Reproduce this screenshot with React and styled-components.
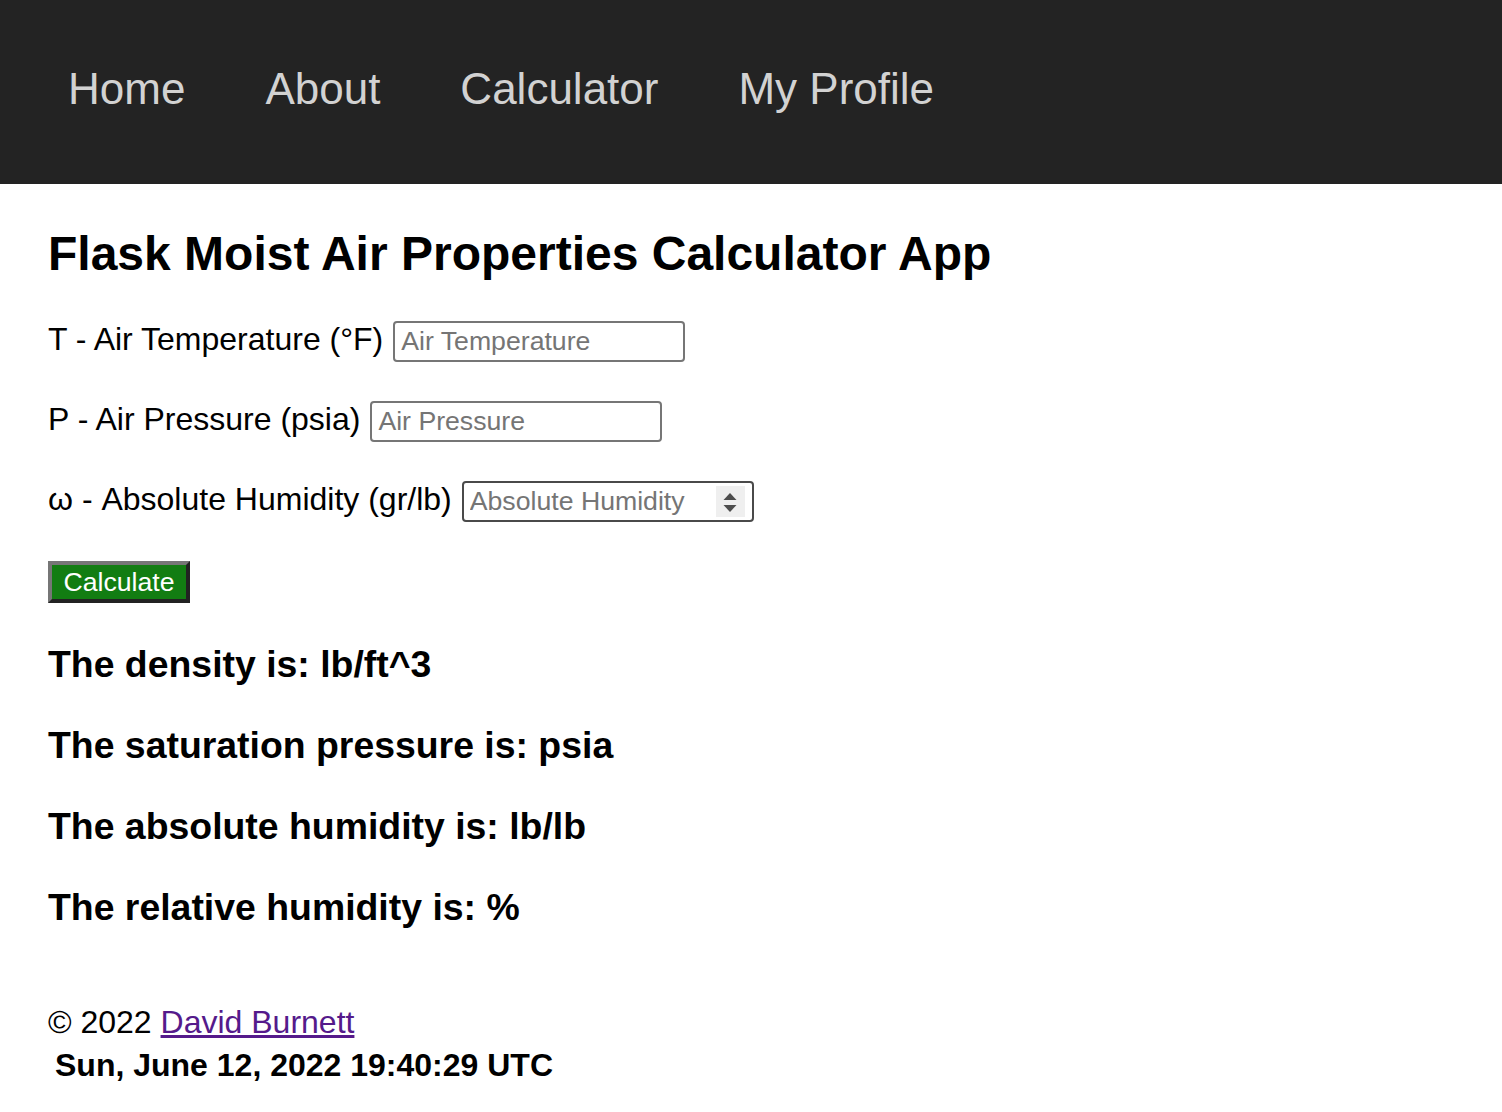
import styled, { createGlobalStyle } from "styled-components";

const GlobalStyle = createGlobalStyle`
  html, body {
    margin: 0;
    padding: 0;
    background: #fff;
    font-family: "Liberation Sans", Arial, Helvetica, sans-serif;
    color: #000;
  }
`;

const links = ["Home", "About", "Calculator", "My Profile"];

const results = [
  "The density is: lb/ft^3",
  "The saturation pressure is: psia",
  "The absolute humidity is: lb/lb",
  "The relative humidity is: %",
];

const App = () => {
  return (
    <>
      <GlobalStyle />
      <NavBar>
        {links.map((link) => (
          <NavLink key={link} href="#">
            {link}
          </NavLink>
        ))}
      </NavBar>

      <Main>
        <Title>Flask Moist Air Properties Calculator App</Title>

        <form onSubmit={(e) => e.preventDefault()}>
          <Field>
            <Label htmlFor="temp">T - Air Temperature (°F)</Label>
            <TextInput id="temp" type="text" placeholder="Air Temperature" />
          </Field>

          <Field>
            <Label htmlFor="pressure">P - Air Pressure (psia)</Label>
            <TextInput id="pressure" type="text" placeholder="Air Pressure" />
          </Field>

          <Field>
            <Label htmlFor="humidity">ω - Absolute Humidity (gr/lb)</Label>
            <NumberBox>
              <NumberInput
                id="humidity"
                type="number"
                placeholder="Absolute Humidity"
              />
              <Spinner>
                <svg width="14" height="24" viewBox="0 0 14 24">
                  <path d="M7 3 L13.5 10 L0.5 10 Z" fill="#4d4d4d" />
                  <path d="M0.5 15 L13.5 15 L7 22 Z" fill="#4d4d4d" />
                </svg>
              </Spinner>
            </NumberBox>
          </Field>

          <Button type="submit">Calculate</Button>
        </form>

        {results.map((r) => (
          <Result key={r}>{r}</Result>
        ))}

        <Footer>
          <div>
            © 2022 <FooterLink href="#">David Burnett</FooterLink>
          </div>
          <Stamp>Sun, June 12, 2022 19:40:29 UTC</Stamp>
        </Footer>
      </Main>
    </>
  );
};

// Styled components
const NavBar = styled.nav`
  display: flex;
  align-items: flex-start;
  box-sizing: border-box;
  height: 184px;
  padding: 64px 0 0 28px;
  background: #232323;
`;

const NavLink = styled.a`
  padding: 0 40px;
  font-size: 44px;
  color: #d2d2d2;
  text-decoration: none;
`;

const Main = styled.main`
  padding: 0 48px 40px;
`;

const Title = styled.h2`
  margin: 42px 0 40px;
  font-size: 48px;
  font-weight: bold;
`;

const Field = styled.div`
  display: flex;
  align-items: center;
  gap: 10px;
  height: 41px;
  margin-bottom: 39px;
`;

const Label = styled.label`
  font-size: 32px;
  position: relative;
  top: -2px;
`;

const TextInput = styled.input`
  box-sizing: border-box;
  width: 292px;
  height: 41px;
  padding: 0 6px;
  border: 2px solid #767676;
  border-radius: 4px;
  font-family: inherit;
  font-size: 26.67px;
  color: #000;

  &::placeholder {
    color: #757575;
  }
`;

const NumberBox = styled.div`
  display: flex;
  align-items: center;
  box-sizing: border-box;
  width: 292px;
  height: 41px;
  padding: 0 7px 0 6px;
  border: 2px solid #4a4a4a;
  border-radius: 4px;
`;

const NumberInput = styled.input`
  flex: 1;
  min-width: 0;
  padding: 0;
  border: none;
  outline: none;
  font-family: inherit;
  font-size: 26.67px;
  -moz-appearance: textfield;

  &::placeholder {
    color: #757575;
  }

  &::-webkit-inner-spin-button,
  &::-webkit-outer-spin-button {
    -webkit-appearance: none;
    margin: 0;
  }
`;

const Spinner = styled.span`
  display: flex;
  align-items: center;
  justify-content: center;
  width: 29px;
  height: 31px;
  background: #efefef;
`;

const Button = styled.button`
  display: block;
  box-sizing: border-box;
  width: 142px;
  height: 42px;
  margin: 0;
  padding: 0;
  border: 4px solid;
  border-color: #767676 #222 #222 #767676;
  background: #127d12;
  color: #fff;
  font-family: inherit;
  font-size: 26.67px;
  cursor: pointer;
`;

const Result = styled.h3`
  margin: 37px 0;
  font-size: 37.4px;
  line-height: 44px;
  font-weight: bold;

  &:first-of-type {
    margin-top: 39px;
  }
`;

const Footer = styled.footer`
  margin-top: 72px;
  font-size: 32px;
  line-height: 43px;
`;

const FooterLink = styled.a`
  color: #551a8b;
  text-decoration: underline;
`;

const Stamp = styled.div`
  padding-left: 7px;
  font-weight: bold;
`;

export default App;
